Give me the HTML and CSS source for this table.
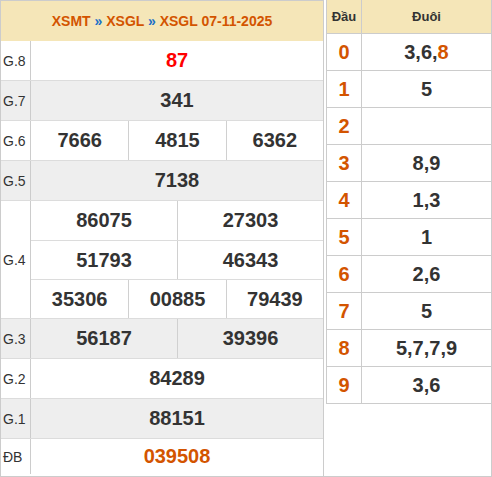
FILE: index.html
```html
<!DOCTYPE html>
<html lang="vi">
<head>
<meta charset="utf-8">
<title>XSGL 07-11-2025</title>
<link rel="stylesheet" href="styles.css">
</head>
<body>
<div class="wrap">
  <div class="kq">
    <div class="kq-head"><span class="crumb"><span class="lnk">XSMT</span> <span class="sep">»</span> <span class="lnk">XSGL</span> <span class="sep">»</span> <span class="lnk">XSGL 07-11-2025</span></span></div>
    <div class="prize"><div class="lbl">G.8</div><div class="nums"><div class="line"><div class="cell red">87</div></div></div></div>
    <div class="prize alt"><div class="lbl">G.7</div><div class="nums"><div class="line"><div class="cell">341</div></div></div></div>
    <div class="prize"><div class="lbl">G.6</div><div class="nums"><div class="line"><div class="cell">7666</div><div class="cell">4815</div><div class="cell">6362</div></div></div></div>
    <div class="prize alt"><div class="lbl">G.5</div><div class="nums"><div class="line"><div class="cell">7138</div></div></div></div>
    <div class="prize"><div class="lbl">G.4</div><div class="nums">
      <div class="line"><div class="cell">86075</div><div class="cell">27303</div></div>
      <div class="line"><div class="cell">51793</div><div class="cell">46343</div></div>
      <div class="line"><div class="cell">35306</div><div class="cell">00885</div><div class="cell">79439</div></div>
    </div></div>
    <div class="prize alt"><div class="lbl">G.3</div><div class="nums"><div class="line"><div class="cell">56187</div><div class="cell">39396</div></div></div></div>
    <div class="prize"><div class="lbl">G.2</div><div class="nums"><div class="line"><div class="cell">84289</div></div></div></div>
    <div class="prize alt"><div class="lbl">G.1</div><div class="nums"><div class="line"><div class="cell">88151</div></div></div></div>
    <div class="prize db"><div class="lbl">ĐB</div><div class="nums"><div class="line"><div class="cell orange">039508</div></div></div></div>
  </div>
  <div class="side">
    <div class="lt">
      <div class="lt-row lt-head"><div class="dau">Đầu</div><div class="duoi">Đuôi</div></div>
      <div class="lt-row"><div class="dau">0</div><div class="duoi">3,6,<span class="hl">8</span></div></div>
      <div class="lt-row"><div class="dau">1</div><div class="duoi">5</div></div>
      <div class="lt-row"><div class="dau">2</div><div class="duoi"></div></div>
      <div class="lt-row"><div class="dau">3</div><div class="duoi">8,9</div></div>
      <div class="lt-row"><div class="dau">4</div><div class="duoi">1,3</div></div>
      <div class="lt-row"><div class="dau">5</div><div class="duoi">1</div></div>
      <div class="lt-row"><div class="dau">6</div><div class="duoi">2,6</div></div>
      <div class="lt-row"><div class="dau">7</div><div class="duoi">5</div></div>
      <div class="lt-row"><div class="dau">8</div><div class="duoi">5,7,7,9</div></div>
      <div class="lt-row"><div class="dau">9</div><div class="duoi">3,6</div></div>
    </div>
  </div>
</div>
</body>
</html>
```

FILE: styles.css
```css
* { box-sizing: border-box; }
body {
  margin: 0;
  font-family: "Liberation Sans", Arial, sans-serif;
  color: #333;
  background: #fff;
}
.wrap {
  display: flex;
  align-items: flex-start;
  width: 492px;
  height: 477px;
  border-right: 1px solid #ccc;
  border-bottom: 1px solid #ccc;
}
.kq {
  width: 324px;
  height: 476px;
  border: 1px solid #ccc;
  border-bottom: 0;
  display: flex;
  flex-direction: column;
}
.kq-head {
  height: 40px;
  background: #f5e6b8;
  display: flex;
  align-items: center;
  justify-content: center;
  font-size: 14px;
  font-weight: bold;
  color: #d35400;
}
.crumb { white-space: pre; }
.sep { color: #1b6fc8; }
.prize {
  display: flex;
  border-bottom: 1px solid #dcdcdc;
}
.prize.alt { background: #eeeeee; }
.prize.db { border-bottom: 0; }
.lbl {
  width: 30px;
  flex: none;
  border-right: 1px solid #ccc;
  font-size: 14px;
  padding-left: 2px;
  display: flex;
  align-items: center;
  color: #333;
}
.nums {
  flex: 1;
  display: flex;
  flex-direction: column;
}
.line {
  height: 39px;
  display: grid;
  grid-auto-flow: column;
  grid-auto-columns: 1fr;
}
.line + .line { border-top: 1px solid #dcdcdc; }
.prize.db .line { height: 35px; }
.cell {
  display: flex;
  align-items: center;
  justify-content: center;
  font-size: 20px;
  font-weight: bold;
  color: #333;
}
.cell + .cell { border-left: 1px solid #d0d0d0; }
.cell.red { color: #f00; }
.cell.orange { color: #d35400; }

.side {
  flex: 1;
  padding-left: 2px;
}
.lt {
  border-left: 1px solid #ccc;
}
.lt-row {
  display: flex;
  height: 37px;
  border-bottom: 1px solid #ccc;
}
.lt-head {
  height: 34px;
  background: #f5e6b8;
}
.dau {
  width: 35px;
  flex: none;
  border-right: 1px solid #ccc;
  display: flex;
  align-items: center;
  justify-content: center;
  font-size: 20px;
  font-weight: bold;
  color: #d35400;
}
.duoi {
  flex: 1;
  display: flex;
  align-items: center;
  justify-content: center;
  font-size: 20px;
  font-weight: bold;
  color: #333;
}
.lt-head .dau, .lt-head .duoi {
  font-size: 13px;
  color: #333;
}
.hl { color: #d35400; }
```
